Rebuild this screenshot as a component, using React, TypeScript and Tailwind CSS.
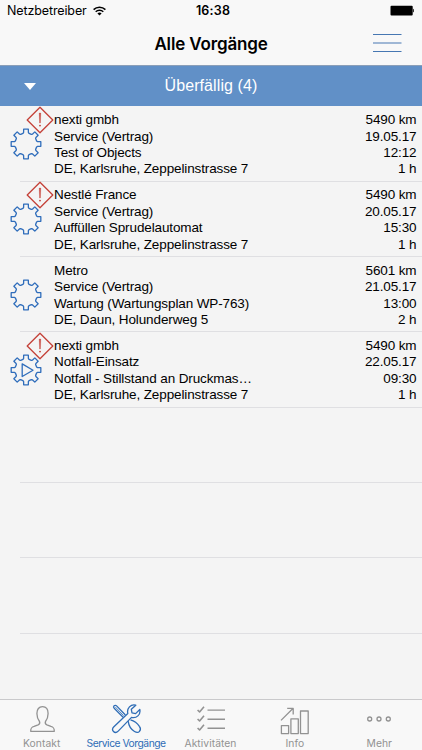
import React from 'react';

interface Job {
  customer: string;
  type: string;
  title: string;
  address: string;
  distance: string;
  date: string;
  time: string;
  duration: string;
  overdue: boolean;
  started?: boolean;
}

const jobs: Job[] = [
  { customer: 'nexti gmbh', type: 'Service (Vertrag)', title: 'Test of Objects', address: 'DE, Karlsruhe, Zeppelinstrasse 7', distance: '5490 km', date: '19.05.17', time: '12:12', duration: '1 h', overdue: true },
  { customer: 'Nestlé France', type: 'Service (Vertrag)', title: 'Auffüllen Sprudelautomat', address: 'DE, Karlsruhe, Zeppelinstrasse 7', distance: '5490 km', date: '20.05.17', time: '15:30', duration: '1 h', overdue: true },
  { customer: 'Metro', type: 'Service (Vertrag)', title: 'Wartung (Wartungsplan WP-763)', address: 'DE, Daun, Holunderweg 5', distance: '5601 km', date: '21.05.17', time: '13:00', duration: '2 h', overdue: false },
  { customer: 'nexti gmbh', type: 'Notfall-Einsatz', title: 'Notfall - Stillstand an Druckmas…', address: 'DE, Karlsruhe, Zeppelinstrasse 7', distance: '5490 km', date: '22.05.17', time: '09:30', duration: '1 h', overdue: true, started: true },
];

// Eight teeth around the hub, each one is six points at a fixed angle offset
const gearPath = (() => {
  const points: string[] = [];
  const at = (radius: number, degrees: number) => {
    const a = (degrees * Math.PI) / 180;
    return `${(16 + radius * Math.sin(a)).toFixed(2)} ${(16 - radius * Math.cos(a)).toFixed(2)}`;
  };
  for (let i = 0; i < 8; i++) {
    const c = i * 45;
    points.push(`${i === 0 ? 'M' : 'L'}${at(11, c - 16)}`);
    points.push(`L${at(11.9, c - 11.5)}`);
    points.push(`L${at(15, c - 9)}`);
    points.push(`L${at(15, c + 9)}`);
    points.push(`L${at(11.9, c + 11.5)}`);
    points.push(`L${at(11, c + 16)}`);
    points.push(`A11 11 0 0 1 ${at(11, c + 29)}`);
  }
  return points.join(' ') + 'Z';
})();

const GearIcon = ({ started }: { started?: boolean }) => (
  <svg className="size-8" viewBox="0 0 32 32" fill="none" stroke="#2f6dbb" strokeWidth="1.3" strokeLinejoin="round">
    <path d={gearPath} />
    {started && <path d="M12.2 9.9v12.6L23 16.2z" />}
  </svg>
);

const WarningIcon = () => (
  <svg className="size-7" viewBox="0 0 28 28" fill="none" stroke="#c44138" strokeWidth="1.3" strokeLinejoin="round">
    <path d="M14 1.2 26.8 14 14 26.8 1.2 14z" />
    <path d="M13.2 7h1.6l-.4 10h-.8z" fill="#c44138" strokeWidth=".3" />
    <circle cx="14" cy="19.6" r=".95" fill="#c44138" stroke="none" />
  </svg>
);

const StatusBar = () => (
  <div className="grid h-[22px] grid-cols-3 items-center px-[7px] font-[Inter,sans-serif] text-[12.5px] leading-[22px]">
    <div className="flex items-center gap-[6px]">
      <span className="tracking-[-0.12px]">Netzbetreiber</span>
      <svg className="h-[10px] w-[13px]" viewBox="0 0 13 10" fill="none" stroke="#000" strokeWidth="1.5">
        <path d="M.6 3.6a8.3 8.3 0 0 1 11.8 0" />
        <path d="M2.7 5.8a5.4 5.4 0 0 1 7.6 0" />
        <path d="M6.5 9.6 4.4 7.5a3 3 0 0 1 4.2 0z" fill="#000" stroke="none" />
      </svg>
    </div>
    <span className="pl-[4px] text-center font-semibold tracking-[0.2px]">16:38</span>
    <svg className="-mt-px mr-px h-[11px] w-[26px] justify-self-end" viewBox="0 0 26 11">
      <rect x="2.5" y=".8" width="22.2" height="9.6" rx="1" fill="#000" />
      <path d="M25.2 3.8a2 2 0 0 1 0 3.6z" fill="#000" />
    </svg>
  </div>
);

const NavBar = () => (
  <header className="grid h-[43px] grid-cols-[1fr_auto_1fr] items-center font-[Inter,sans-serif]">
    <span />
    <h1 className="text-[17px] leading-5 font-semibold tracking-[-0.15px]">Alle Vorgänge</h1>
    <button className="mt-[-1px] mr-[20px] justify-self-end">
      <svg className="block h-5 w-[30px]" viewBox="0 0 30 20" stroke="#4677b2" strokeWidth="1.1">
        <path d="M1 1.5h28.5M1 10h28.5M1 18.5h28.5" />
      </svg>
    </button>
  </header>
);

const JobRow = ({ job }: { job: Job }) => (
  <li className="relative flex h-[75.3px]">
    <div className="relative w-[54px] shrink-0 pt-[21.5px] pl-[9.8px]">
      <GearIcon started={job.started} />
      {job.overdue && (
        <div className="absolute top-[-0.5px] left-[25.5px]">
          <WarningIcon />
        </div>
      )}
    </div>
    <div className="flex flex-1 justify-between pt-[5.6px] pr-[5.5px] text-[13.5px] leading-[16.4px] tracking-[-0.12px] whitespace-nowrap">
      <div>
        <p>{job.customer}</p>
        <p>{job.type}</p>
        <p>{job.title}</p>
        <p>{job.address}</p>
      </div>
      <div className="text-right">
        <p>{job.distance}</p>
        <p>{job.date}</p>
        <p>{job.time}</p>
        <p>{job.duration}</p>
      </div>
    </div>
    <div className="absolute right-0 bottom-0 left-[20px] h-px bg-[#dfdfe2]" />
  </li>
);

const tabs = [
  {
    label: 'Kontakt',
    icon: (
      <path d="M4.7 28.3c0-3.2.6-4.2 3.4-5l4-1.5c1.6-.7 2-1.8 1.4-3.3-1.7-2.3-2.6-4.5-2.6-8 0-4.2 2-6.9 5.6-6.9s5.6 2.7 5.6 6.9c0 3.5-.9 5.7-2.6 8-.6 1.5-.2 2.6 1.4 3.3l4 1.5c2.8.8 3.4 1.8 3.4 5z" />
    ),
  },
  {
    label: 'Service Vorgänge',
    active: true,
    icon: (
      <>
        <path d="M14.4 12 5.6 2.9c-.8-.8-1.8-.8-2.5-.1s-.7 1.7.1 2.5l8.9 8.9" />
        <path d="m4.4 4.1 8.2 8.6" strokeWidth=".8" />
        <path d="M17.2 18.2c.5 4.3 2.5 8.1 6.3 10.3 2.1 1.2 4 1 5-.2 1.2-1.3 1.2-3.2-.1-5-2.3-3.4-5.2-5.3-8.9-6.4" />
        <path d="M24.8 2.2c-5.1-1.2-9.2 3-8 8.3L2.9 23.8c-1.6 1.6-1.6 3.5-.4 4.7 1.3 1.3 3.1 1.2 4.7-.4l13.3-13.7c5 1.2 9.4-2.6 8.3-7.9l-4.2 4.1-3.6-.8-.7-3.5z" />
      </>
    ),
  },
  {
    label: 'Aktivitäten',
    icon: (
      <>
        <path d="m2.6 7 2 2L9 3.8M2.6 16l2 2L9 12.8M2.6 25l2 2L9 21.8" strokeWidth="1.6" />
        <path d="M12.5 7.1H30M12.5 16.2H30M12.5 25.2H30" strokeWidth="1.4" />
      </>
    ),
  },
  {
    label: 'Info',
    icon: (
      <>
        <path d="M2.4 22.6h7.2v8H2.4zM11.9 15.9h7.4v14.7h-7.4zM21.5 8h7.7v22.6h-7.7z" />
        <path d="M2 17.4 13.9 5.5M8.2 5.4h6v6" />
      </>
    ),
  },
  {
    label: 'Mehr',
    icon: (
      <>
        <circle cx="5.7" cy="16" r="2" />
        <circle cx="15" cy="16" r="2" />
        <circle cx="24.3" cy="16" r="2" />
      </>
    ),
  },
];

const TabBar = () => (
  <nav className="flex h-[51px] border-t border-[#c9c9cb] bg-[#f8f8f8] font-[Inter,sans-serif]">
    {tabs.map((tab) => (
      <button
        key={tab.label}
        className={`flex min-w-0 flex-1 basis-0 flex-col items-center pt-[3px] text-[10.3px] leading-3 whitespace-nowrap ${tab.active ? 'tracking-[-0.48px] text-[#2f6db6]' : 'tracking-[0.05px] text-[#929292]'}`}
      >
        <svg className="size-8" viewBox="0 0 32 32" fill="none" stroke="currentColor" strokeWidth="1.3" strokeLinejoin="round">
          {tab.icon}
        </svg>
        <span className="mt-[2px] mr-[1px]">{tab.label}</span>
      </button>
    ))}
  </nav>
);

const App: React.FC = () => {
  return (
    <div className="flex h-[750px] w-[422px] flex-col overflow-hidden bg-[#f4f4f4] font-['Liberation_Sans',Arial,sans-serif] text-black">
      <div className="bg-[#f8f8f8]">
        <StatusBar />
        <NavBar />
      </div>

      {/* Section header */}
      <div className="grid h-[41px] shrink-0 grid-cols-3 items-center border-t border-[#8b9fb8] bg-[#6190c7] text-white">
        <svg className="ml-[24px] h-[7px] w-3" viewBox="0 0 12 7" fill="currentColor">
          <path d="M0 0h12L6 7z" />
        </svg>
        <h2 className="text-center text-[16px] tracking-[0.1px] whitespace-nowrap">Überfällig (4)</h2>
      </div>

      <ul className="flex-1 overflow-hidden pt-[0.6px]">
        {jobs.map((job) => (
          <JobRow key={job.date} job={job} />
        ))}
        {[0, 1, 2].map((i) => (
          <li key={i} className="ml-[20px] h-[75.3px] border-b border-[#dfdfe2]" />
        ))}
      </ul>

      <TabBar />
    </div>
  );
};

export default App;
